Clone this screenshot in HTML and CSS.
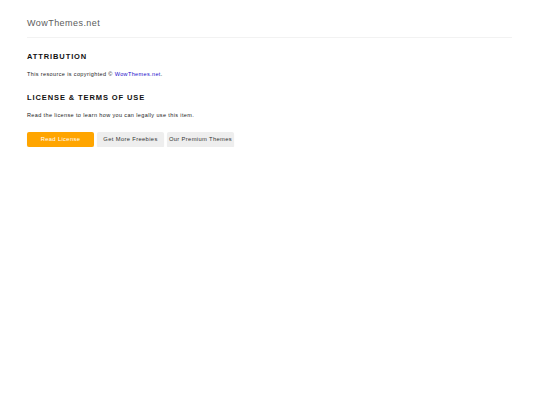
FILE: index.html
```html
<!DOCTYPE html>
<html>
<head>
    <title>WowThemes.net</title>
    <link rel="stylesheet" href="styles.css">
</head>
<body>
    <div class="wrapper">
        <header class="site-header">
            <div class="site-title">WowThemes.net</div>
        </header>

        <section class="block">
            <h2>Attribution</h2>
            <p>This resource is copyrighted &copy; <a href="#">WowThemes.net</a>.</p>
        </section>

        <section class="block">
            <h2>License &amp; Terms of Use</h2>
            <p>Read the license to learn how you can legally use this item.</p>
            <div class="buttons">
                <a class="btn btn-primary" href="#">Read License</a>
                <a class="btn" href="#">Get More Freebies</a>
                <a class="btn" href="#">Our Premium Themes</a>
            </div>
        </section>
    </div>
</body>
</html>
```

FILE: styles.css
```css
body {
    font-family: "Liberation Sans", Arial, sans-serif;
    margin: 0;
    background: #fff;
    color: #222;
}

.wrapper {
    padding: 0 28px 0 27px;
}

.site-header {
    padding-top: 17px;
    padding-bottom: 8px;
    border-bottom: 1px solid #f2f2f2;
}

.site-title {
    font-size: 9px;
    font-weight: normal;
    letter-spacing: 0.45px;
    color: #5c5c5c;
    line-height: 12px;
}

.block {
    margin-top: 14px;
}

.block + .block {
    margin-top: 15px;
}

h2 {
    font-size: 7.5px;
    font-weight: bold;
    letter-spacing: 0.9px;
    text-transform: uppercase;
    color: #111;
    margin: 0;
    line-height: 10px;
}

p {
    font-size: 5.5px;
    letter-spacing: 0.38px;
    color: #222;
    margin: 8px 0 0;
    line-height: 8px;
}

a {
    color: #1a0dcc;
    text-decoration: none;
}

.buttons {
    display: flex;
    gap: 3px;
    margin-top: 13px;
}

.btn {
    display: block;
    width: 67px;
    height: 15px;
    line-height: 15px;
    text-align: center;
    font-size: 5.8px;
    letter-spacing: 0.35px;
    color: #333;
    background: #eee;
    border-radius: 2px;
    box-shadow: 0 1px 1px rgba(0, 0, 0, 0.08);
}

.btn-primary {
    background: #ffa500;
    color: #fff;
}
```
